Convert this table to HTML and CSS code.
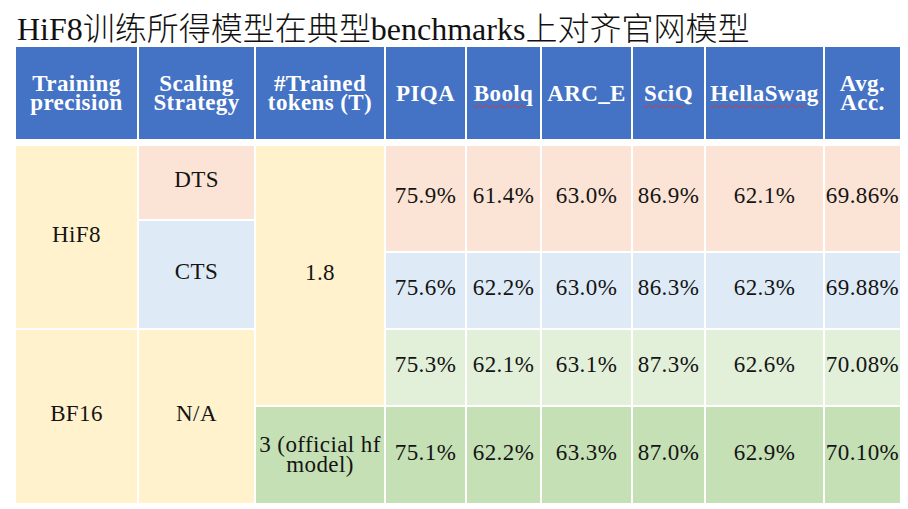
FILE: index.html
```html
<!DOCTYPE html>
<html>
<head>
<meta charset="utf-8">
<title>HiF8 benchmarks</title>
<link rel="stylesheet" href="styles.css">
</head>
<body>
<div class="page">
  <h1 class="title">HiF8<span class="cjk">训练所得模型在典型</span>benchmarks<span class="cjk">上对齐官网模型</span></h1>
  <div class="table">
    <div class="thead">
      <div class="th">Training<br>precision</div>
      <div class="th">Scaling<br>Strategy</div>
      <div class="th">#Trained<br>tokens (T)</div>
      <div class="th">PIQA</div>
      <div class="th"><span class="spell">Boolq</span></div>
      <div class="th">ARC_E</div>
      <div class="th"><span class="spell">SciQ</span></div>
      <div class="th"><span class="spell">HellaSwag</span></div>
      <div class="th">Avg.<br>Acc.</div>
    </div>
    <div class="tbody">
      <div class="td c1 r-hif8 yellow">HiF8</div>
      <div class="td c2 r-dts pink">DTS</div>
      <div class="td c2 r-cts blue">CTS</div>
      <div class="td c3 r-tok yellow">1.8</div>
      <div class="td c1 r-bf yellow">BF16</div>
      <div class="td c2 r-bf yellow">N/A</div>
      <div class="td c3 r-off green">3 (official hf<br>model)</div>

      <div class="td r1 pink">75.9%</div>
      <div class="td r1 pink">61.4%</div>
      <div class="td r1 pink">63.0%</div>
      <div class="td r1 pink">86.9%</div>
      <div class="td r1 pink">62.1%</div>
      <div class="td r1 pink">69.86%</div>

      <div class="td r2 blue">75.6%</div>
      <div class="td r2 blue">62.2%</div>
      <div class="td r2 blue">63.0%</div>
      <div class="td r2 blue">86.3%</div>
      <div class="td r2 blue">62.3%</div>
      <div class="td r2 blue">69.88%</div>

      <div class="td r3 lgreen">75.3%</div>
      <div class="td r3 lgreen">62.1%</div>
      <div class="td r3 lgreen">63.1%</div>
      <div class="td r3 lgreen">87.3%</div>
      <div class="td r3 lgreen">62.6%</div>
      <div class="td r3 lgreen">70.08%</div>

      <div class="td r4 green">75.1%</div>
      <div class="td r4 green">62.2%</div>
      <div class="td r4 green">63.3%</div>
      <div class="td r4 green">87.0%</div>
      <div class="td r4 green">62.9%</div>
      <div class="td r4 green">70.10%</div>
    </div>
  </div>
</div>
</body>
</html>
```

FILE: styles.css
```css
html, body {
  margin: 0;
  padding: 0;
  background: #ffffff;
}

.page {
  width: 908px;
  height: 509px;
  overflow: hidden;
  font-family: "Liberation Serif", "Times New Roman", Times, serif;
  color: #141414;
}

.title {
  margin: 0;
  height: 41px;
  padding: 6px 0 0 17px;
  font-size: 32px;
  font-weight: normal;
  line-height: 40px;
  white-space: nowrap;
  color: #111111;
}

.cjk {
  font-family: "Noto Sans CJK SC", sans-serif;
  font-weight: 300;
}

.table {
  margin-left: 16px;
  width: 884px;
}

.thead,
.tbody {
  display: grid;
  grid-template-columns: 121px 115px 128px 79px 73px 89px 71px 117px 75px;
  column-gap: 2px;
}

.thead {
  grid-template-rows: 92px;
}

.tbody {
  margin-top: 7px;
  grid-template-rows: 73px 30px 75px 75px 96px;
  row-gap: 2px;
}

.th {
  background: #4472c4;
  color: #ffffff;
  font-weight: bold;
  font-size: 23px;
  line-height: 19px;
  letter-spacing: 0.4px;
  display: flex;
  align-items: center;
  justify-content: center;
  text-align: center;
}

.spell {
  text-decoration: underline wavy #d23a3a;
  text-decoration-thickness: 1px;
  text-underline-offset: 3px;
}

.td {
  font-size: 23px;
  line-height: 20px;
  letter-spacing: 0.4px;
  display: flex;
  align-items: center;
  justify-content: center;
  text-align: center;
  padding-bottom: 5px;
  box-sizing: border-box;
  white-space: nowrap;
}

.c1 { grid-column: 1; }
.c2 { grid-column: 2; }
.c3 { grid-column: 3; }

.r-hif8 { grid-row: 1 / 4; }
.r-dts { grid-row: 1 / 2; }
.r-cts { grid-row: 2 / 4; }
.r-tok { grid-row: 1 / 5; }
.r-bf { grid-row: 4 / 6; }
.r-off { grid-row: 5 / 6; padding-bottom: 0; }

.r1 { grid-row: 1 / 3; }
.r2 { grid-row: 3 / 4; }
.r3 { grid-row: 4 / 5; }
.r4 { grid-row: 5 / 6; }

.yellow { background: #fff2cc; }
.pink { background: #fbe4d5; }
.blue { background: #deebf7; }
.lgreen { background: #e2efd9; }
.green { background: #c5e0b4; }
```
